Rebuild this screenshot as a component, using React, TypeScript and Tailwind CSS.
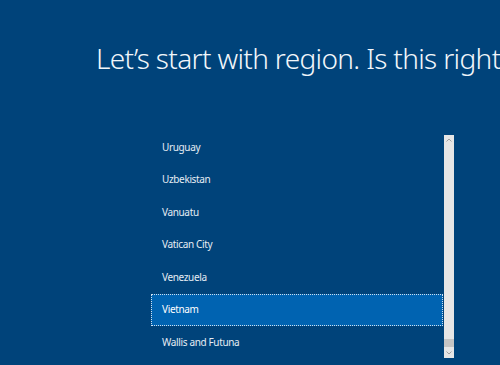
const regions = [
  'Uruguay',
  'Uzbekistan',
  'Vanuatu',
  'Vatican City',
  'Venezuela',
  'Vietnam',
  'Wallis and Futuna',
];

export default function App() {
  const selected = 'Vietnam';

  return (
    <div className="w-[500px] h-[365px] overflow-hidden bg-[#00437a] text-white" style={{ fontFamily: '"Noto Sans", "Open Sans", sans-serif' }}>
      <h1 className="pl-[96px] pt-[38px] text-[28px] font-light leading-[40px] tracking-[-0.65px] whitespace-nowrap text-[#f2f6fa]">
        Let’s start with region. Is this right?
      </h1>

      <div className="mt-[53px] ml-[151px] flex">
        <ul className="w-[292px]">
          {regions.map((r) => (
            <li
              key={r}
              className={
                r === selected
                  ? 'h-[32.5px] flex items-center pl-[10px] text-[10px] tracking-[-0.35px] bg-[#0063b1] border border-dotted border-[#cfe0f0]'
                  : 'h-[32.5px] flex items-center pl-[11px] text-[10px] tracking-[-0.35px] text-[#e6edf4]'
              }
            >
              {r}
            </li>
          ))}
        </ul>

        <div className="ml-[1px] mt-[4px] w-[10px] h-[223px] bg-[#e6e6e6] flex flex-col items-center">
          <svg width="10" height="9" viewBox="0 0 10 9" className="mt-[1px]">
            <path d="M2.5 5.5 L5 3 L7.5 5.5" fill="none" stroke="#a0a0a0" strokeWidth="1" />
          </svg>
          <div className="flex-1" />
          <div className="w-full h-[8px] bg-[#c4c4c4]" />
          <svg width="10" height="11" viewBox="0 0 10 11">
            <path d="M2.5 4.5 L5 7 L7.5 4.5" fill="none" stroke="#a0a0a0" strokeWidth="1" />
          </svg>
        </div>
      </div>
    </div>
  );
}
